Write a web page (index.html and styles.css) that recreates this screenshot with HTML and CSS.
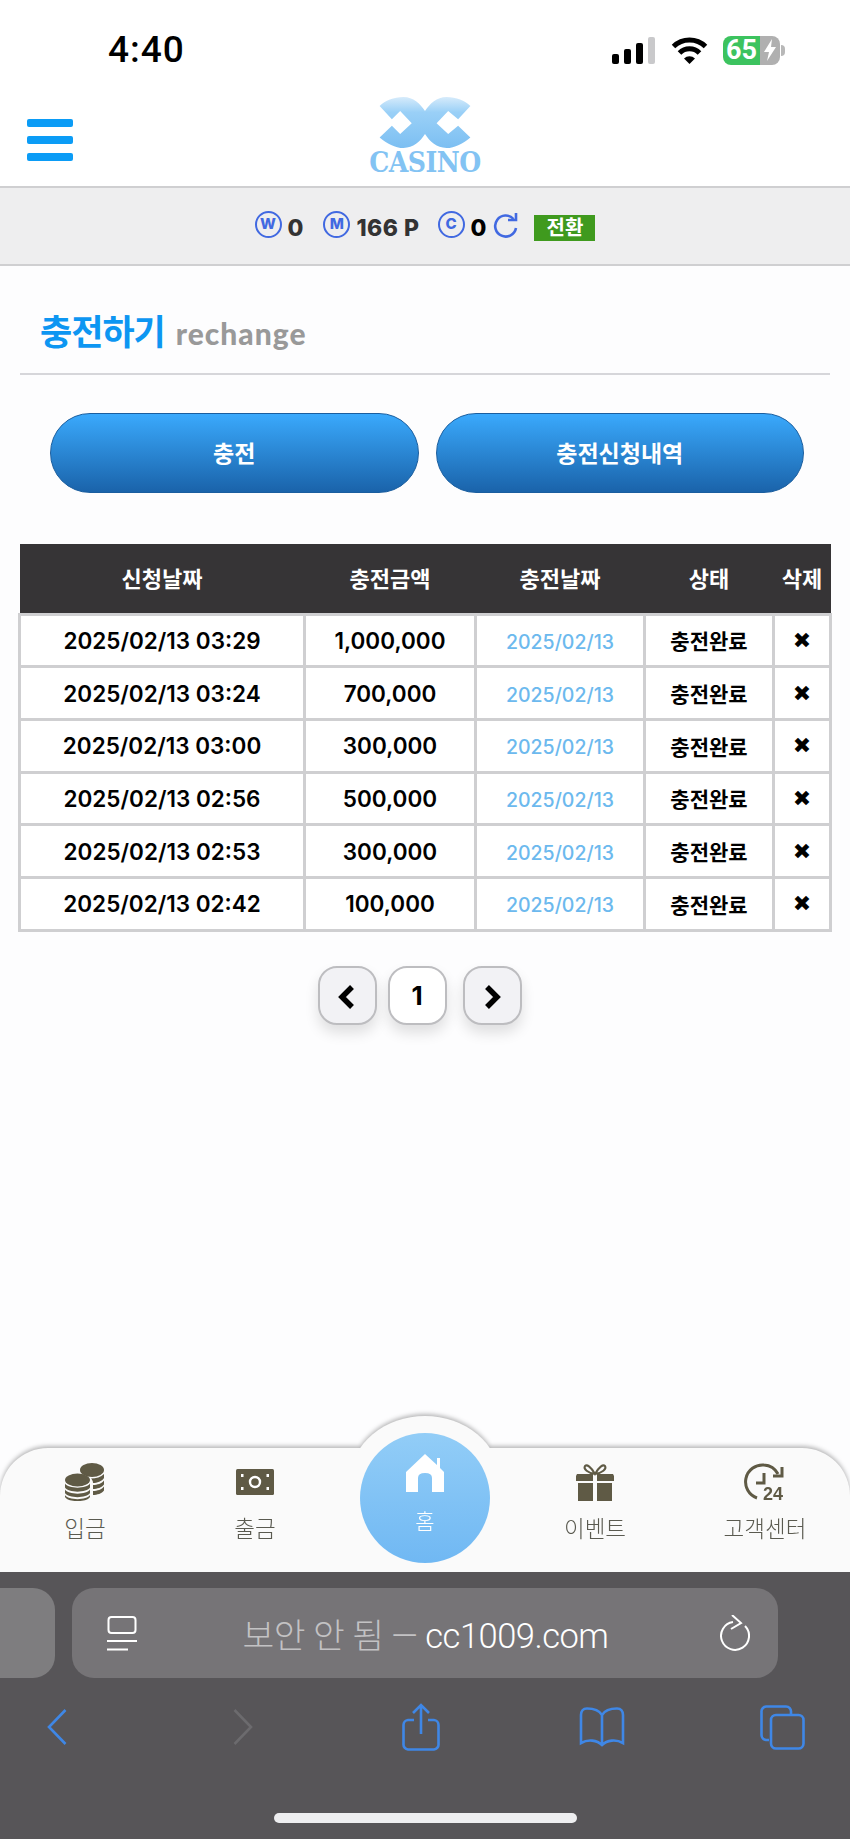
FILE: index.html
```html
<!DOCTYPE html>
<html lang="ko">
<head>
    <meta charset="UTF-8">
    <title>충전하기</title>
    <link rel="stylesheet" href="styles.css">
</head>
<body>
<div class="phone">
    <div class="status">
        <span class="time">4:40</span>
        <div class="status_icons">
            <div class="signal"><i class="b1"></i><i class="b2"></i><i class="b3"></i><i class="b4"></i></div>
            <svg class="wifi" width="37" height="27" viewBox="0 0 37 27">
                <path d="M2.5 9.5A23 23 0 0 1 34.5 9.5" fill="none" stroke="#000" stroke-width="5"/>
                <path d="M8.5 16A14 14 0 0 1 28.5 16" fill="none" stroke="#000" stroke-width="5"/>
                <path d="M13 21.5A8 8 0 0 1 24 21.5L18.5 27Z" fill="#000"/>
            </svg>
            <div class="battery">
                <span class="level">65</span>
                <span class="rest">
                    <svg width="14" height="22" viewBox="0 0 14 22"><path d="M9 0L1 13H6L4 22L13 8H8Z" fill="#fff"/></svg>
                </span>
            </div>
            <i class="nub"></i>
        </div>
    </div>

    <div class="header">
        <div class="burger"><i></i><i></i><i></i></div>
        <div class="logo">
            <svg width="94" height="51" viewBox="0 0 280 154">
                <defs>
                    <linearGradient id="logo_fill" x1="0" y1="0" x2="0" y2="1">
                        <stop offset="0" stop-color="#d6ebfb"/>
                        <stop offset="0.3" stop-color="#9ad0f7"/>
                        <stop offset="1" stop-color="#7cbff2"/>
                    </linearGradient>
                </defs>
                <path fill="url(#logo_fill)" d="M3 27C20 10 45 1 75 0C105 0 125 20 140 42C155 20 175 0 205 0C235 1 260 10 277 27L240 67L210 42L175 79L210 112L240 87L277 122C255 140 230 154 205 154C175 154 155 135 140 112C125 135 105 154 75 154C50 154 25 140 3 122L40 87L65 112L100 79L65 42L40 67Z"/>
            </svg>
            <span class="logo_text">CASINO</span>
        </div>
    </div>

    <div class="wallet">
        <span class="coin">W</span><b class="num n1">0</b>
        <span class="coin">M</span><b class="num n2">166 P</b>
        <span class="coin">C</span><b class="num n3">0</b>
        <svg class="refresh" width="27" height="26" viewBox="0 0 27 26">
            <path d="M21.5 6A10.5 10.5 0 1 0 24 15" fill="none" stroke="#4169e1" stroke-width="2.6"/>
            <path d="M16 7H24V0" fill="none" stroke="#4169e1" stroke-width="2.6"/>
        </svg>
        <span class="swap">전환</span>
    </div>

    <div class="main">
        <div class="title">
            <h2>충전하기</h2>
            <span>rechange</span>
        </div>
        <div class="btns">
            <a class="btn">충전</a>
            <a class="btn">충전신청내역</a>
        </div>
        <table class="list">
            <colgroup>
                <col class="c1"><col class="c2"><col class="c3"><col class="c4"><col class="c5">
            </colgroup>
            <thead>
                <tr><th>신청날짜</th><th>충전금액</th><th>충전날짜</th><th>상태</th><th>삭제</th></tr>
            </thead>
            <tbody>
                <tr><td>2025/02/13 03:29</td><td>1,000,000</td><td class="day">2025/02/13</td><td class="st">충전완료</td><td class="del">✖</td></tr>
                <tr><td>2025/02/13 03:24</td><td>700,000</td><td class="day">2025/02/13</td><td class="st">충전완료</td><td class="del">✖</td></tr>
                <tr><td>2025/02/13 03:00</td><td>300,000</td><td class="day">2025/02/13</td><td class="st">충전완료</td><td class="del">✖</td></tr>
                <tr><td>2025/02/13 02:56</td><td>500,000</td><td class="day">2025/02/13</td><td class="st">충전완료</td><td class="del">✖</td></tr>
                <tr><td>2025/02/13 02:53</td><td>300,000</td><td class="day">2025/02/13</td><td class="st">충전완료</td><td class="del">✖</td></tr>
                <tr><td>2025/02/13 02:42</td><td>100,000</td><td class="day">2025/02/13</td><td class="st">충전완료</td><td class="del">✖</td></tr>
            </tbody>
        </table>
        <div class="pages">
            <a class="page arrow">
                <svg width="20" height="26" viewBox="0 0 20 26"><path d="M15 3L5 13L15 23" fill="none" stroke="#000" stroke-width="5.5"/></svg>
            </a>
            <a class="page">1</a>
            <a class="page arrow next">
                <svg width="20" height="26" viewBox="0 0 20 26"><path d="M5 3L15 13L5 23" fill="none" stroke="#000" stroke-width="5.5"/></svg>
            </a>
        </div>
    </div>

    <div class="tabbar">
        <a class="tab">
            <svg width="40" height="38" viewBox="0 0 40 38" fill="#5f5a45">
                <ellipse cx="27" cy="7" rx="12" ry="7"/>
                <path d="M26 15.500C31 15.500 36 14 39 11V15C37 18.500 32 20 28 20C28 18 27 16.500 26 15.500Z"/>
                <path d="M28 22C32 22 37 20.500 39 17.500V21.500C37 24.500 32 26 28 26Z"/>
                <path d="M28 28C32 28 37 26.500 39 23.500V27.500C37 30.500 32 32 28 32Z"/>
                <ellipse cx="12.500" cy="17" rx="12.500" ry="6.500"/>
                <path d="M0 20.500C3 26 22 26 25 20.500V24.500C22 30 3 30 0 24.500Z"/>
                <path d="M0 26.500C3 32 22 32 25 26.500V30C22 35.500 3 35.500 0 30Z"/>
                <path d="M0 32C3 37.500 22 37.500 25 32V34C22 39.500 3 39.500 0 34Z"/>
            </svg>
            <span>입금</span>
        </a>
        <a class="tab">
            <svg class="cash" width="38" height="26" viewBox="0 0 38 26">
                <rect width="38" height="26" rx="1.500" fill="#5f5a45"/>
                <circle cx="19" cy="13" r="5" fill="none" stroke="#fff" stroke-width="2.400"/>
                <g fill="#fff"><rect x="5" y="5" width="2.500" height="3"/><rect x="30.500" y="5" width="2.500" height="3"/><rect x="5" y="18" width="2.500" height="3"/><rect x="30.500" y="18" width="2.500" height="3"/></g>
            </svg>
            <span>출금</span>
        </a>
        <a class="tab"></a>
        <a class="tab">
            <svg width="38" height="38" viewBox="0 0 38 38" fill="#5f5a45">
                <path d="M19 11C15 4 11 1 9 3C7 6 12 10 19 11C26 10 31 6 29 3C27 1 23 4 19 11Z" fill="none" stroke="#5f5a45" stroke-width="2"/>
                <path d="M1 11H17V18H0V13ZM21 11H37L38 13V18H21Z"/>
                <path d="M2 20H17V38H2ZM21 20H36V38H21Z"/>
            </svg>
            <span>이벤트</span>
        </a>
        <a class="tab">
            <svg class="clock" width="40" height="38" viewBox="0 0 40 38">
                <path d="M33 11A17 17 0 0 0 19 2A17 17 0 0 0 12 35" fill="none" stroke="#5f5a45" stroke-width="3"/>
                <path d="M37 4V13H28" fill="none" stroke="#5f5a45" stroke-width="3"/>
                <path d="M19 10V20H11" fill="none" stroke="#5f5a45" stroke-width="3"/>
                <text x="18" y="37" class="clock24">24</text>
            </svg>
            <span>고객센터</span>
        </a>
        <a class="home_btn">
            <svg width="40" height="38" viewBox="0 0 40 38" fill="#fff">
                <path d="M20 0L32 11V4H35V14L39 18V38H27V24Q27 19 20 19Q13 19 13 24V38H1V18Z"/>
            </svg>
            <span>홈</span>
        </a>
    </div>

    <div class="safari">
        <div class="url_row">
            <div class="prev_tab"></div>
            <div class="url">
                <svg width="30" height="35" viewBox="0 0 30 35" fill="none" stroke="#fff" stroke-width="2">
                    <rect x="1.500" y="1" width="27" height="16" rx="3"/>
                    <path d="M0 25H30M0 33.500H21"/>
                </svg>
                <div class="addr"><span class="dim">보안 안 됨 — </span>cc1009.com</div>
                <svg width="30" height="36" viewBox="0 0 30 36" fill="none" stroke="#fff" stroke-width="2">
                    <path d="M25 11A14 14 0 1 1 13 7"/>
                    <path d="M12 0L21 8L11 14"/>
                </svg>
            </div>
        </div>
        <div class="tools">
            <svg width="20" height="36" viewBox="0 0 20 36" fill="none" stroke="#3f87e6" stroke-width="2.600"><path d="M18.500 1L2 18L18.500 35"/></svg>
            <svg width="20" height="36" viewBox="0 0 20 36" fill="none" stroke="#6c6b6e" stroke-width="2.600"><path d="M1.500 1L18 18L1.500 35"/></svg>
            <svg width="38" height="48" viewBox="0 0 38 48" fill="none" stroke="#3f87e6" stroke-width="2.600">
                <path d="M12 17H6A5 5 0 0 0 1.500 22V41A5 5 0 0 0 6 46.500H32A5 5 0 0 0 36.500 41V22A5 5 0 0 0 32 17H26"/>
                <path d="M19 31V2M11 10L19 2L27 10"/>
            </svg>
            <svg width="48" height="40" viewBox="0 0 48 40" fill="none" stroke="#3f87e6" stroke-width="2.600">
                <path d="M24 8C21 3 15 1.500 9 1.500C5 1.500 3 4 3 8V36C10 32 19 33 24 38C29 33 38 32 45 36V8C45 4 43 1.500 39 1.500C33 1.500 27 3 24 8ZM24 8V38"/>
            </svg>
            <svg width="45" height="45" viewBox="0 0 45 45" fill="none" stroke="#3f87e6" stroke-width="2.600">
                <path d="M9 35H6A5 5 0 0 1 1.500 30V7A5 5 0 0 1 6 1.500H26A5 5 0 0 1 31 7V10"/>
                <rect x="11" y="10" width="32.500" height="33.500" rx="5"/>
            </svg>
        </div>
        <div class="indicator"></div>
    </div>
</div>
</body>
</html>
```

FILE: styles.css
```css
*{ box-sizing: border-box; }
body,h2{ margin: 0; padding: 0; }
h2{ font-size: 100%; }
a{ text-decoration: none; }

body{
    font-family: "Noto Sans CJK KR", "Noto Sans", sans-serif;
    background-color: #fdfdfe;
}
.phone{
    width: 850px;
    height: 1839px;
    display: flex;
    flex-direction: column;
    overflow: hidden;
}

/* status bar */
.status{
    height: 80px;
    flex: none;
    display: flex;
    justify-content: space-between;
    padding: 35px 65px 0 108px;
    background-color: #fff;
}
.time{
    font-family: Roboto, sans-serif;
    font-weight: 500;
    font-size: 37px;
    line-height: 30px;
    letter-spacing: 1px;
    color: #000;
}
.status_icons{
    display: flex;
    align-items: center;
    height: 30px;
}
.signal{
    display: flex;
    align-items: flex-end;
    gap: 5px;
    height: 27px;
    margin-right: 16px;
}
.signal i{
    width: 7px;
    background-color: #000;
    border-radius: 2px;
}
.signal .b1{ height: 10px; }
.signal .b2{ height: 15px; }
.signal .b3{ height: 21px; }
.signal .b4{ height: 27px; background-color: #c9c9cb; }
.wifi{ margin-right: 15px; }
.battery{
    display: flex;
    width: 57px;
    height: 29px;
}
.battery .level{
    width: 37px;
    background-color: #3cc35f;
    border-radius: 8px 0 0 8px;
    color: #fff;
    font-family: Roboto, sans-serif;
    font-weight: 700;
    font-size: 27px;
    line-height: 29px;
    text-align: center;
}
.battery .rest{
    flex: 1;
    background-color: #b0b0b0;
    border-radius: 0 8px 8px 0;
    display: flex;
    align-items: center;
    justify-content: center;
}
.nub{
    width: 4px;
    height: 11px;
    margin-left: 1px;
    background-color: #b8b8b8;
    border-radius: 0 4px 4px 0;
}

/* header */
.header{
    height: 108px;
    flex: none;
    display: flex;
    align-items: flex-start;
    position: relative;
    background-color: #fff;
    border-bottom: 2px solid #cfcfd1;
    padding-left: 27px;
}
.burger{
    width: 46px;
    margin-top: 39px;
    display: flex;
    flex-direction: column;
    gap: 9px;
}
.burger i{
    display: block;
    height: 8px;
    border-radius: 2px;
    background-color: #0b9cf6;
}
.logo{
    width: 110px;
    margin: 17px 0 0 297px;
    display: flex;
    flex-direction: column;
    align-items: center;
}
.logo_text{
    font-family: "DejaVu Serif Condensed", "DejaVu Serif", serif;
    font-weight: 700;
    font-size: 28px;
    line-height: 24px;
    margin-top: 3px;
    letter-spacing: -0.5px;
    white-space: nowrap;
    color: #83c3f3;
}

/* wallet bar */
.wallet{
    height: 78px;
    flex: none;
    display: flex;
    align-items: center;
    justify-content: center;
    background-color: #eeeeef;
    border-bottom: 2px solid #cfcfd1;
    color: #333;
}
.coin{
    width: 27px;
    height: 27px;
    margin-top: -4px;
    border: 2.5px solid #4169e1;
    border-radius: 50%;
    color: #4169e1;
    font-family: Inter, sans-serif;
    font-weight: 800;
    font-size: 15px;
    line-height: 22px;
    text-align: center;
}
.num{
    font-family: Inter, sans-serif;
    font-weight: 800;
    font-size: 23px;
    margin: 3px 0 0 6px;
}
.n1{ margin-right: 20px; }
.n2{ margin-right: 18px; letter-spacing: 0.5px; }
.n3{ color: #000; }
.refresh{ margin: 0 0 0 6px; }
.swap{
    width: 61px;
    height: 26px;
    margin: 4px 0 0 15px;
    background-color: #3f9a1e;
    color: #fff;
    font-weight: 700;
    font-size: 20px;
    line-height: 24px;
    text-align: center;
}

/* content */
.main{
    flex: 1;
    padding: 0 20px;
    background-color: #fdfdfe;
}
.title{
    height: 109px;
    display: flex;
    align-items: center;
    padding: 20px 0 0 20px;
    border-bottom: 2px solid #d6d6da;
}
.title h2{
    font-weight: 700;
    font-size: 35px;
    color: #0d96f2;
    letter-spacing: -1px;
}
.title span{
    margin: 6px 0 0 11px;
    font-family: Lato, sans-serif;
    font-weight: 900;
    font-size: 30px;
    letter-spacing: 1px;
    color: #999;
}
.btns{
    display: flex;
    gap: 17px;
    padding: 38px 26px 0 30px;
}
.btn{
    flex: 1;
    height: 80px;
    border: 1px solid #1a5e9f;
    border-radius: 40px;
    background: linear-gradient(#3aa9fc, #1a63aa);
    color: #fff;
    font-weight: 700;
    font-size: 23px;
    line-height: 76px;
    text-align: center;
}
.list{
    width: 811px;
    margin: 51px 0 0 -2px;
    table-layout: fixed;
    border-collapse: collapse;
    font-family: Inter, "Noto Sans CJK KR", sans-serif;
}
.c1{ width: 285px; }
.c2{ width: 171px; }
.c3{ width: 169px; }
.c4{ width: 129px; }
.c5{ width: 57px; }
.list th{
    height: 70px;
    padding: 0 0 2px;
    background-color: #363436;
    color: #fff;
    font-family: "Noto Sans CJK KR", sans-serif;
    font-weight: 700;
    font-size: 22px;
    white-space: nowrap;
}
.list td{
    height: 52.7px;
    padding: 0;
    border: 3px solid #cfcfd1;
    background-color: #fff;
    color: #000;
    font-weight: 600;
    font-size: 22.5px;
    text-align: center;
}
.list .day{
    color: #6cb9ee;
    font-weight: 500;
    font-size: 19.5px;
    padding-top: 3px;
}
.list .st{
    font-family: "Noto Sans CJK KR", sans-serif;
    font-weight: 700;
    font-size: 21px;
}
.list .del{
    font-family: "DejaVu Sans", sans-serif;
    font-size: 22px;
}
.pages{
    display: flex;
    justify-content: center;
    gap: 11px;
    margin-top: 34px;
    padding-right: 11px;
}
.page{
    width: 59px;
    height: 59px;
    display: flex;
    align-items: center;
    justify-content: center;
    border: 2px solid #bdbdc0;
    border-radius: 19px;
    background-color: #fff;
    box-shadow: 0 8px 14px rgba(0, 0, 0, 0.12);
    color: #000;
    font-family: Inter, sans-serif;
    font-weight: 700;
    font-size: 26px;
}
.arrow{ background-color: #f2f2f5; padding-top: 3px; }
.next{ margin-left: 5px; }

/* bottom menu */
.tabbar{
    height: 124px;
    flex: none;
    display: flex;
    position: relative;
    background-color: #fafafa;
    border-radius: 48px 48px 0 0;
    filter: drop-shadow(0 -2px 2px rgba(0, 0, 0, 0.28));
}
.tabbar::before{
    content: "";
    position: absolute;
    left: 351px;
    top: -32px;
    width: 148px;
    height: 90px;
    border-radius: 74px 74px 0 0 / 62px 62px 0 0;
    background-color: #fafafa;
}
.tab{
    width: 170px;
    height: 124px;
    padding-top: 15px;
    display: flex;
    flex-direction: column;
    align-items: center;
    position: relative;
    color: #5a5a50;
    font-weight: 300;
    font-size: 22.5px;
}
.tab svg{ height: 38px; flex: none; }
.tab .cash{ height: 26px; margin: 6px 0; }
.tab .clock{ overflow: visible; }
.tab span{ margin-top: 10px; line-height: 33px; }
.clock24{
    font-family: "Liberation Sans", sans-serif;
    font-weight: 700;
    font-size: 18px;
    fill: #5f5a45;
}
.home_btn{
    position: absolute;
    left: 360px;
    top: -15px;
    width: 130px;
    height: 130px;
    display: flex;
    flex-direction: column;
    align-items: center;
    padding-top: 21px;
    border-radius: 50%;
    background: linear-gradient(#92cdf7, #70b8f3);
    color: #fff;
    font-weight: 300;
    font-size: 21px;
}
.home_btn span{ margin-top: 13px; }

/* safari */
.safari{
    height: 267px;
    flex: none;
    position: relative;
    background-color: #575558;
}
.url_row{
    display: flex;
    gap: 17px;
    padding-top: 16px;
}
.prev_tab{
    width: 55px;
    height: 90px;
    border-radius: 0 22px 22px 0;
    background-color: #7e7d7f;
}
.url{
    width: 706px;
    height: 90px;
    display: flex;
    align-items: center;
    padding: 0 28px 0 35px;
    border-radius: 22px;
    background-color: #767477;
}
.addr{
    flex: 1;
    padding-right: 6px;
    font-family: Roboto, "Noto Sans CJK KR", sans-serif;
    font-weight: 300;
    font-size: 34.5px;
    letter-spacing: -0.5px;
    color: #fff;
    text-align: center;
}
.dim{ color: #c3c2c4; }
.tools{
    display: grid;
    grid-template-columns: 114px 258px 98px 264px 96px;
    justify-items: center;
    align-items: center;
    height: 48px;
    margin-top: 25px;
}
.indicator{
    position: absolute;
    left: 274px;
    bottom: 16px;
    width: 303px;
    height: 10px;
    border-radius: 5px;
    background-color: #eeeef0;
}
```
